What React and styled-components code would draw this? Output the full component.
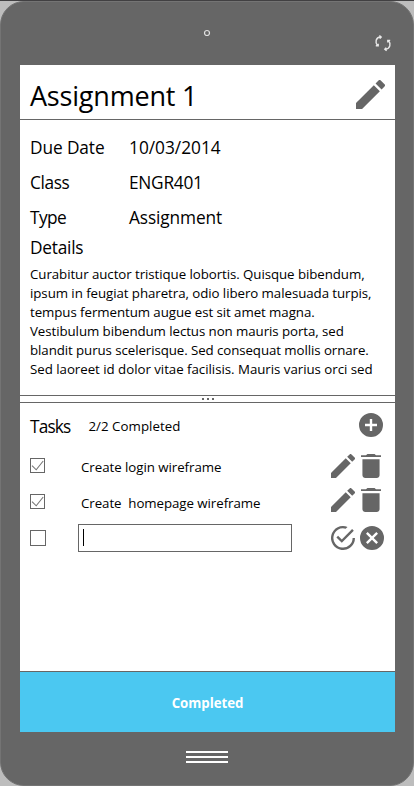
import React from "react";
import styled, { createGlobalStyle } from "styled-components";

const GRAY = "#666666";

const GlobalStyle = createGlobalStyle`
  * { box-sizing: border-box; }
  body { margin: 0; background: #bdbdbd; font-family: "Open Sans", "Noto Sans", sans-serif; color: #000; }
  h1, h2, p, dl, dt, dd, ul { margin: 0; padding: 0; font-weight: 400; }
  button { border: 0; padding: 0; background: none; font: inherit; }
`;

const Backdrop = styled.div`
  width: 414px;
  height: 786px;
  border-top: 1px solid #414042;
  overflow: hidden;
`;

const Phone = styled.main`
  height: 785px;
  display: flex;
  flex-direction: column;
  background: ${GRAY};
  border: 1px solid #747474;
  border-radius: 24px;
`;

const TopBezel = styled.div`
  height: 63px;
  flex: none;
  display: grid;
  grid-template-columns: 1fr 8px 1fr;
  padding-right: 2px;
`;

const Camera = styled.svg`
  grid-column: 2;
  width: 8px;
  height: 8px;
  margin: 27px 0 0 1px;
`;

const SyncButton = styled.button`
  justify-self: end;
  align-self: start;
  display: flex;
  width: 18px;
  height: 18px;
  margin: 32px 19px 0 0;
`;

const Screen = styled.div`
  width: 375px;
  height: 667px;
  flex: none;
  margin-left: 19px;
  display: flex;
  flex-direction: column;
  background: #fff;
`;

const Header = styled.header`
  height: 55px;
  flex: none;
  display: flex;
  justify-content: space-between;
  border-bottom: 1px solid ${GRAY};
  padding: 15px 10px 0 10px;
`;

const Text = styled.span`
  display: block;
  white-space: pre;
  font-size: ${(p) => p.$size || 13.3}px;
  line-height: ${(p) => p.$line || 19}px;
  letter-spacing: ${(p) => p.$track || 0}px;
`;

const Title = styled(Text).attrs({ as: "h1" })`
  margin-top: -3px;
`;

const IconButton = styled.button`
  display: flex;
  flex: none;
  width: ${(p) => p.$w || 24}px;
  height: ${(p) => p.$h || 24}px;
`;

const Icon = styled.svg`
  display: block;
  width: 100%;
  height: 100%;
  fill: ${GRAY};
`;

const Details = styled.section`
  height: 275px;
  flex: none;
  padding: 10px 10px 0;
  overflow: hidden;
`;

const Facts = styled.dl`
  display: grid;
  grid-template-columns: 99px 1fr;
  grid-auto-rows: 35px;
`;

const Label = styled(Text).attrs({ $size: 17.3, $line: 35 })``;

const DetailsLabel = styled(Label)`
  margin-top: 1px;
  line-height: 24px;
`;

const Paragraph = styled.div`
  margin-top: 5px;
`;

const Splitter = styled.div`
  height: 8px;
  flex: none;
  display: flex;
  justify-content: center;
  gap: 3px;
  padding-top: 2px;
  border: solid ${GRAY};
  border-width: 1px 0;
`;

const Dot = styled.i`
  width: 2px;
  height: 2px;
  background: ${GRAY};
`;

const Tasks = styled.section`
  flex: 1;
  display: flex;
  flex-direction: column;
`;

const TasksHead = styled.div`
  height: 45px;
  display: flex;
  align-items: center;
  padding: 2px 12px 0 10px;

  & > button { margin-left: auto; margin-top: -3px; }
`;

const Count = styled(Text)`
  margin-left: 18px;
`;

const TaskList = styled.ul`
  list-style: none;
`;

const TaskRow = styled.li`
  display: grid;
  grid-template-columns: 48px 1fr auto;
  align-items: center;
  height: 36px;
  padding: 0 10px;
`;

const TaskName = styled(Text)`
  padding-left: 3px;
  margin-top: 2px;
`;

const Box = styled.span`
  display: block;
  width: ${(p) => p.$size || 15}px;
  height: ${(p) => p.$size || 15}px;
  border: 1px solid ${GRAY};
  margin-top: ${(p) => p.$shift || 0}px;
`;

const Tick = styled.svg`
  display: block;
  width: 13px;
  height: 13px;
  fill: none;
  stroke: #777;
  stroke-width: 1.1;
`;

const Actions = styled.div`
  display: flex;
  gap: ${(p) => p.$gap || 6}px;
  margin-right: ${(p) => p.$right || 4}px;
  margin-top: ${(p) => p.$top || 0}px;
`;

const Field = styled.div`
  width: 214px;
  height: 28px;
  border: 1px solid ${GRAY};
  padding: 4px 0 0 4px;
`;

const Caret = styled.i`
  display: block;
  width: 1px;
  height: 17px;
  background: #000;
`;

const CompleteButton = styled.button`
  && {
    height: 61px;
    flex: none;
    display: flex;
    justify-content: center;
    border-top: 1px solid ${GRAY};
    background: #4bc8f1;
    color: #fff;
    padding-top: 22px;
  }
`;

const BoldText = styled(Text)`
  font-weight: 700;
`;

const BottomBezel = styled.div`
  display: flex;
  flex-direction: column;
  align-items: center;
  gap: 3px;
  padding-top: 19px;
`;

const MenuLine = styled.i`
  width: 42px;
  height: 2px;
  background: #fff;
`;

const Pencil = () => (
  <Icon viewBox="3 3 18 18">
    <path d="M3 17.25V21h3.75L17.81 9.94l-3.75-3.75L3 17.25zM20.71 7.04a1 1 0 0 0 0-1.41l-2.34-2.34a1 1 0 0 0-1.41 0l-1.83 1.83 3.75 3.75 1.83-1.83z" />
  </Icon>
);

const Trash = () => (
  <Icon viewBox="5 3 14 18" preserveAspectRatio="none">
    <path d="M6 19c0 1.1.9 2 2 2h8c1.1 0 2-.9 2-2V7H6v12zM19 4h-3.5l-1-1h-5l-1 1H5v1.3h14V4z" />
  </Icon>
);

const Plus = () => (
  <Icon viewBox="2 2 20 20">
    <path d="M12 2a10 10 0 1 0 0 20 10 10 0 0 0 0-20zm5 11h-4v4h-2v-4H7v-2h4V7h2v4h4v2z" />
  </Icon>
);

const CheckCircle = () => (
  <Icon viewBox="2 2 20 20">
    <path d="M7.91 10.08L6.5 11.5 11 16 21 6l-1.41-1.42L11 13.17l-3.09-3.09zM20 12a8 8 0 1 1-5.8-7.69l1.57-1.57A10 10 0 1 0 22 12h-2z" />
  </Icon>
);

const Cross = () => (
  <Icon viewBox="2 2 20 20">
    <path d="M12 2a10 10 0 1 0 0 20 10 10 0 0 0 0-20zm5 13.59L15.59 17 12 13.41 8.41 17 7 15.59 10.59 12 7 8.41 8.41 7 12 10.59 15.59 7 17 8.41 13.41 12 17 15.59z" />
  </Icon>
);

const Sync = () => (
  <svg width="18" height="18" viewBox="0 0 18 18" fill="none" stroke="#fff" strokeOpacity=".85" strokeWidth="1.4">
    <path d="M6.6 3C1.6 3.2.8 8.6 3.6 11.8M5.4 1.4L7.2 3 5.8 4.6M1.8 11.8h2.4V9.8" />
    <path d="M11.4 15.2c5-.2 5.8-5.6 3-8.8M12.6 16.8l-1.8-1.6 1.4-1.6M16.2 6.4h-2.4v2" />
  </svg>
);

const facts = [
  ["Due Date", -0.1, "10/03/2014", 0],
  ["Class", -0.4, "ENGR401", -0.25],
  ["Type", -0.6, "Assignment", -0.12],
];

const lines = [
  ["Curabitur auctor tristique lobortis. Quisque bibendum,", -0.07],
  ["ipsum in feugiat pharetra, odio libero malesuada turpis,", -0.065],
  ["tempus fermentum augue est sit amet magna.", -0.071],
  ["Vestibulum bibendum lectus non mauris porta, sed", -0.074],
  ["blandit purus scelerisque. Sed consequat mollis ornare.", -0.084],
  ["Sed laoreet id dolor vitae facilisis. Mauris varius orci sed", -0.035],
];

const tasks = [
  { name: "Create login wireframe", track: -0.049, top: -1 },
  { name: "Create  homepage wireframe", track: -0.062, top: -5 },
];

export default function App() {
  return (
    <Backdrop>
      <GlobalStyle />
      <Phone>
        <TopBezel>
          <Camera viewBox="0 0 8 8">
            <circle cx="4" cy="4" r="2.5" fill="none" stroke="#e0e0e0" strokeWidth="1.2" />
          </Camera>
          <SyncButton aria-label="Sync"><Sync /></SyncButton>
        </TopBezel>
        <Screen>
          <Header>
            <Title $size={27} $line={38} $track={-0.2}>Assignment 1</Title>
            <IconButton $w={29} $h={29} aria-label="Edit assignment"><Pencil /></IconButton>
          </Header>
          <Details>
            <Facts>
              {facts.map(([label, lt, value, vt]) => (
                <React.Fragment key={label}>
                  <Label as="dt" $track={lt}>{label}</Label>
                  <Label as="dd" $track={vt}>{value}</Label>
                </React.Fragment>
              ))}
            </Facts>
            <DetailsLabel as="h2" $track={-0.23}>Details</DetailsLabel>
            <Paragraph>
              {lines.map(([line, track]) => (
                <Text key={line} $track={track}>{line}</Text>
              ))}
            </Paragraph>
          </Details>
          <Splitter><Dot /><Dot /><Dot /></Splitter>
          <Tasks>
            <TasksHead>
              <Label as="h2" $track={-0.85}>Tasks</Label>
              <Count $track={0.035}>2/2 Completed</Count>
              <IconButton aria-label="Add task"><Plus /></IconButton>
            </TasksHead>
            <TaskList>
              {tasks.map((task) => (
                <TaskRow key={task.name}>
                  <Box $shift={-1}>
                    <Tick viewBox="0 0 13 13"><path d="M1 6.6l4.2 4.2L12.2 2" /></Tick>
                  </Box>
                  <TaskName $track={task.track}>{task.name}</TaskName>
                  <Actions $top={task.top}>
                    <IconButton aria-label="Edit task"><Pencil /></IconButton>
                    <IconButton $w={20} aria-label="Delete task"><Trash /></IconButton>
                  </Actions>
                </TaskRow>
              ))}
              <TaskRow>
                <Box $size={16} />
                <Field><Caret /></Field>
                <Actions $gap={5} $right={1}>
                  <IconButton aria-label="Save task"><CheckCircle /></IconButton>
                  <IconButton aria-label="Cancel"><Cross /></IconButton>
                </Actions>
              </TaskRow>
            </TaskList>
          </Tasks>
          <CompleteButton>
            <BoldText $track={-0.05}>Completed</BoldText>
          </CompleteButton>
        </Screen>
        <BottomBezel><MenuLine /><MenuLine /><MenuLine /></BottomBezel>
      </Phone>
    </Backdrop>
  );
}
